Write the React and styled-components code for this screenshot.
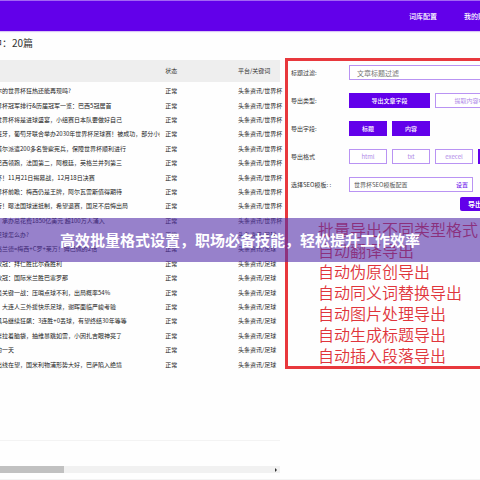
import React from 'react';
import styled, { createGlobalStyle, css } from 'styled-components'

const articles = [
  { title: '尔的世界杯狂热还能再现吗?', tag: '世界杯' },
  { title: '界杯冠军排行&历届冠军一览：巴西5冠居首', tag: '世界杯' },
  { title: '世界杯将是进球盛宴，小组赛日本队要做好自己', tag: '世界杯' },
  { title: '班牙，葡萄牙联合举办2030年世界杯足球赛！被成功，部分小组赛', tag: '世界杯' },
  { title: '塔尔派遣200多名警察宪兵，保障世界杯顺利进行', tag: '世界杯' },
  { title: '巴西领跑，法国第二，阿根廷，英格兰并列第三', tag: '世界杯' },
  { title: '杯！11月21日揭幕战，12月18日决赛', tag: '世界杯' },
  { title: '界杯前瞻：梅西仍是王牌，阿尔瓦雷斯值得期待', tag: '世界杯' },
  { title: '行！曝法国球迷抵制，希望退赛，国足不后悔出局', tag: '世界杯' },
  { title: '：承办总花费1850亿美元 超100万人涌入', tag: '世界杯' },
  { title: '足球怎么办?', tag: '足球' },
  { title: '格兰德=梅西+C罗+莱万！姆巴佩的2倍', tag: '足球' },
  { title: '欧冠：拜仁胜比尔森胜利', tag: '足球' },
  { title: '欧冠：国际米兰胜巴塞罗那', tag: '足球' },
  { title: '最关键一战：压哨点球不利，出局概率54%', tag: '足球' },
  { title: '，大连人三外援快乐足球，谢晖面临严峻考验', tag: '足球' },
  { title: '黑马继续狂飙：3连胜+0丢球，有望终结30年等等', tag: '足球' },
  { title: '摩拉着脑袋，抽维暴跳如雷，小因扎吉眼神亮了', tag: '足球' },
  { title: '的一天', tag: '足球' },
  { title: '出线在望，国米利物浦形势大好，巴萨陷入绝境', tag: '足球' },
]

const features = [
  '批量导出不同类型格式',
  '自动翻译导出',
  '自动伪原创导出',
  '自动同义词替换导出',
  '自动图片处理导出',
  '自动生成标题导出',
  '自动插入段落导出',
]

export default function App() {
  return (
    <Page>
      <GlobalStyle />
      <TopBar>
        <NavLink href="#words">词库配置</NavLink>
        <NavLink href="#mine">我的账户</NavLink>
      </TopBar>

      <Main>
        <ListSide>
          <Count>中：20篇</Count>
          <TableArea>
            <Table>
              <thead>
                <tr>
                  <HeadCell $width="59%"></HeadCell>
                  <HeadCell $width="26%">状态</HeadCell>
                  <HeadCell $width="15%">平台/关键词</HeadCell>
                </tr>
              </thead>
              <tbody>
                {articles.map((a) => (
                  <tr key={a.title}>
                    <TitleCell>{a.title}</TitleCell>
                    <Cell>正常</Cell>
                    <Cell>头条资讯/{a.tag}</Cell>
                  </tr>
                ))}
              </tbody>
            </Table>
          </TableArea>
          <ScrollTrack>
            <ScrollThumb />
            <ScrollArrow />
          </ScrollTrack>
        </ListSide>

        <Panel>
          <Field>
            <Label htmlFor="filter">标题过滤:</Label>
            <Controls>
              <FilterInput id="filter" placeholder="文章标题过滤" />
            </Controls>
          </Field>
          <Field role="group" aria-labelledby="type">
            <Label as="span" id="type">导出类型:</Label>
            <Controls>
              <Option type="button" $wide $active>导出文章字段</Option>
              <Option type="button" $wide>提取内容中图片</Option>
            </Controls>
          </Field>
          <Field role="group" aria-labelledby="fields">
            <Label as="span" id="fields">导出字段:</Label>
            <Controls>
              <Option type="button" $active>标题</Option>
              <Option type="button" $active>内容</Option>
            </Controls>
          </Field>
          <Field role="group" aria-labelledby="format">
            <Label as="span" id="format">导出格式</Label>
            <Controls>
              <Option type="button">html</Option>
              <Option type="button">txt</Option>
              <Option type="button">execel</Option>
              <Option type="button" $active>csv</Option>
            </Controls>
          </Field>
          <Field>
            <Label htmlFor="template">选择SEO模板: :</Label>
            <Controls>
              <TemplateBox>
                <TemplateInput id="template" defaultValue="世界杯SEO模板配置" />
                <SetButton type="button">设置</SetButton>
              </TemplateBox>
            </Controls>
          </Field>
          <Actions>
            <ExportButton type="button">导出</ExportButton>
          </Actions>
          <Features>
            {features.map((f) => (
              <li key={f}>{f}</li>
            ))}
          </Features>
        </Panel>
      </Main>

      <Banner>高效批量格式设置，职场必备技能，轻松提升工作效率</Banner>
    </Page>
  );
}

const GlobalStyle = createGlobalStyle`
  * {
    box-sizing: border-box;
  }
  body {
    margin: 0;
    background: #fefefe;
    color: #333;
    font: 400 6px/12px 'Noto Sans CJK SC', sans-serif;
  }
  button, input {
    font: inherit;
    margin: 0;
  }
`
const Page = styled.div`
  position: relative;
  display: flex;
  flex-direction: column;
  min-height: 100vh;
  overflow: hidden;
  border-bottom: 1px solid #f3f3f3;
`
const TopBar = styled.nav`
  display: flex;
  justify-content: flex-end;
  align-items: center;
  gap: 27px;
  height: 31px;
  margin-right: -12px;
  background: #6200ea;
  border-top: 1px solid #a366f3;
  box-shadow: 0 1px 1px #d9c6f5;
`
const NavLink = styled.a`
  color: #fff;
  font-size: 7px;
  font-weight: 500;
  white-space: nowrap;
  text-decoration: none;
`
const Main = styled.main`
  flex: 1;
  display: grid;
  grid-template-columns: minmax(0, 7fr) minmax(0, 5fr);
`
const ListSide = styled.section`
  display: flex;
  flex-direction: column;
  padding-bottom: 6px;
`
const Count = styled.h1`
  margin: 0 0 0 -8px;
  padding: 4px 0 9px;
  font-size: 10px;
  line-height: 16px;
  font-weight: 400;
`
const TableArea = styled.div`
  flex: 1;
  margin-bottom: 25px;
  border-bottom: 1px solid #f3f3f3;
`
/* the rows share what is left under the header evenly */
const Table = styled.table`
  width: 100%;
  height: 312px;
  table-layout: fixed;
  border-spacing: 0;
`
const HeadCell = styled.th`
  width: ${(props) => props.$width};
  height: 24px;
  padding: 0;
  background: #eee;
  border-bottom: 2px solid #fefefe;
  font-weight: 400;
  text-align: left;
  white-space: nowrap;
`
const Cell = styled.td`
  padding: 0;
  color: #222;
  white-space: nowrap;
`
const TitleCell = styled(Cell)`
  overflow: hidden;
  text-indent: -4px;
  border-right: 5px solid transparent;
`
const ScrollTrack = styled.div`
  display: flex;
  align-items: center;
  justify-content: space-between;
  height: 7px;
  padding-right: 3px;
  background: #f1f1f1;
`
const ScrollThumb = styled.div`
  width: 23%;
  height: 100%;
  background: #c1c1c1;
`
const ScrollArrow = styled.div`
  border: 2px solid transparent;
  border-left-color: #333;
  border-right: 0;
`
const Panel = styled.form`
  align-self: start;
  margin: 27px 0 0 5px;
  padding: 4px 0 0 3px;
  border: 3px solid #e8383d;
  border-right: 0;
`
const Field = styled.div`
  display: grid;
  grid-template-columns: 58px 1fr;
  align-items: center;
  margin-bottom: 13px;
`
const Label = styled.label`
  white-space: nowrap;
`
const Controls = styled.div`
  display: grid;
  grid-template-columns: repeat(4, 38px);
  grid-auto-rows: 15px;
  gap: 5px;
`
const outline = css`
  border: 1px solid #b993f3;
  background: #fff;
`
const FilterInput = styled.input`
  ${outline}
  grid-column: span 4;
  min-width: 0;
  padding: 0 7px;
  font-size: 7px;
  &::placeholder {
    color: #777;
  }
`
const Option = styled.button`
  ${outline}
  grid-column: span ${(props) => (props.$wide ? 2 : 1)};
  padding: 0;
  color: #b08ae8;
  cursor: pointer;
  ${(props) => props.$active && css`
    background: #6200ea;
    border-color: #6200ea;
    color: #fff;
    font-weight: 500;
  `}
`
const TemplateBox = styled.div`
  ${outline}
  grid-column: span 3;
  display: flex;
  align-items: center;
  padding: 0 4px;
`
const TemplateInput = styled.input`
  flex: 1;
  min-width: 0;
  padding: 0;
  border: 0;
  background: none;
  color: #555;
`
const SetButton = styled.button`
  padding: 0;
  border: 0;
  background: none;
  color: #6200ea;
  cursor: pointer;
`
const Actions = styled.div`
  margin: -8px 0 8px 169px;
`
const ExportButton = styled.button`
  display: block;
  width: 56px;
  height: 14px;
  padding: 0 8px;
  border: 0;
  border-radius: 2px;
  background: #6200ea;
  color: #fff;
  font-size: 7px;
  font-weight: 700;
  text-align: left;
  cursor: pointer;
`
const Features = styled.ul`
  margin: 0;
  padding: 0 0 0 27px;
  list-style: none;
  color: #e0353b;
  font-size: 16px;
  font-weight: 350;
  line-height: 21px;
  white-space: nowrap;
`
const Banner = styled.div`
  position: absolute;
  top: 218px;
  left: 0;
  right: 0;
  padding: 11px 0;
  background: rgba(81, 45, 168, 0.6);
  color: #fff;
  font-size: 15px;
  line-height: 22px;
  font-weight: 700;
  text-align: center;
`
